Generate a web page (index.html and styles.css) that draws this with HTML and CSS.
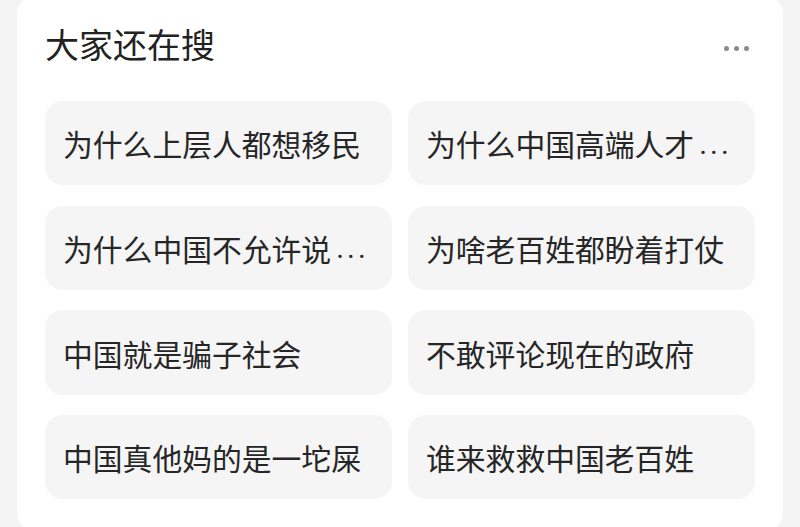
FILE: index.html
```html
<!DOCTYPE html>
<html lang="zh-CN">
<head>
<meta charset="utf-8">
<title>大家还在搜</title>
<link rel="stylesheet" href="styles.css">
</head>
<body>
  <section class="card">
    <header class="card-head">
      <h2 class="card-title">大家还在搜</h2>
      <button class="more" type="button" aria-label="更多">
        <span class="dot"></span><span class="dot"></span><span class="dot"></span>
      </button>
    </header>
    <ul class="queries">
      <li class="query">为什么上层人都想移民</li>
      <li class="query">为什么中国高端人才<span class="ellip">...</span></li>
      <li class="query">为什么中国不允许说<span class="ellip">...</span></li>
      <li class="query">为啥老百姓都盼着打仗</li>
      <li class="query">中国就是骗子社会</li>
      <li class="query">不敢评论现在的政府</li>
      <li class="query">中国真他妈的是一坨屎</li>
      <li class="query">谁来救救中国老百姓</li>
    </ul>
  </section>
</body>
</html>
```
FILE: styles.css
```css
html, body {
  margin: 0;
  padding: 0;
  height: 100%;
  overflow: hidden;
  background: #f4f4f4;
}

body {
  padding: 0 17px;
  font-family: Roboto, "Noto Sans CJK SC", sans-serif;
  color: #222;
}

.card {
  margin-top: -8px;
  background: #fff;
  border-radius: 24px;
  padding: 30px 28px 36px;
}

.card-head {
  display: flex;
  align-items: center;
  justify-content: space-between;
  height: 48px;
  margin-bottom: 31px;
}

.card-title {
  margin: 0;
  font-size: 34px;
  font-weight: 400;
  line-height: 48px;
  color: #222;
}

.more {
  display: flex;
  gap: 5px;
  margin: 4px 6px 0 0;
  padding: 0;
  border: 0;
  background: none;
}

.dot {
  width: 5px;
  height: 5px;
  border-radius: 50%;
  background: #8a8a8a;
}

.queries {
  list-style: none;
  margin: 0;
  padding: 0;
  display: grid;
  grid-template-columns: 1fr 1fr;
  grid-auto-rows: 84.4px;
  column-gap: 16px;
  row-gap: 20.3px;
}

.query {
  display: flex;
  align-items: center;
  padding: 0 18px;
  background: #f5f5f5;
  border-radius: 18px;
  font-size: 29.8px;
  white-space: nowrap;
  overflow: hidden;
  color: #262626;
}

/* truncated query marker: spaced baseline dots */
.ellip {
  margin-left: 5px;
  letter-spacing: 3px;
}
```
